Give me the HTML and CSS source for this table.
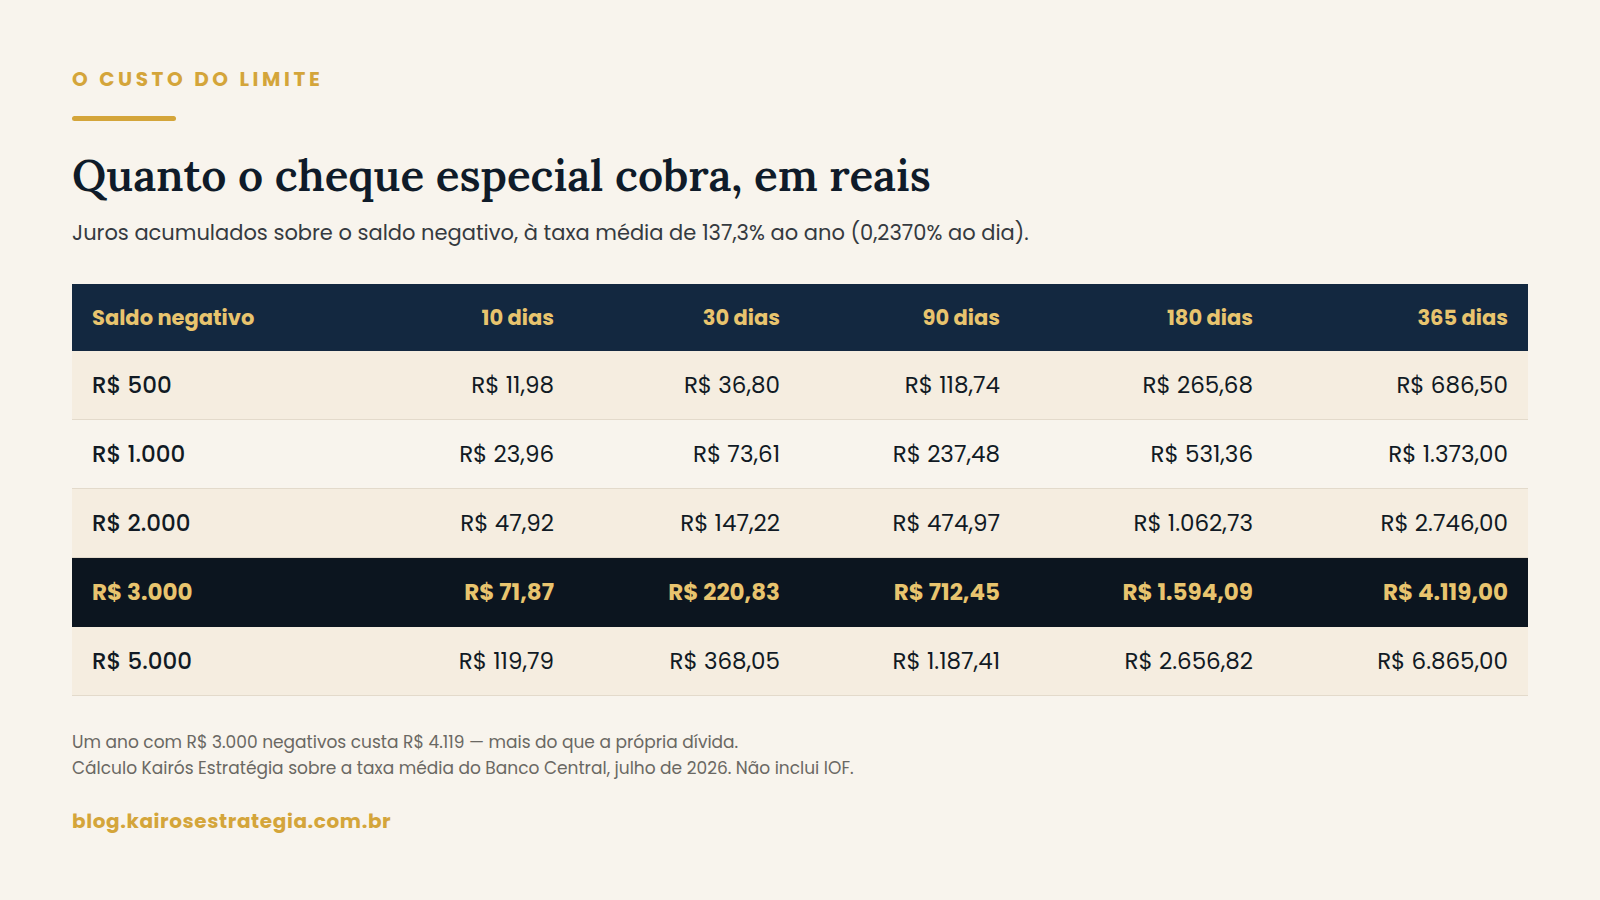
FILE: index.html
```html
<!DOCTYPE html>
<html lang="pt-BR">
<head>
<meta charset="utf-8">
<title>O custo do limite</title>
<link rel="stylesheet" href="styles.css">
</head>
<body>
<main class="page">
  <p class="eyebrow">O CUSTO DO LIMITE</p>
  <div class="rule"></div>
  <h1 class="title">Quanto o cheque especial cobra, em reais</h1>
  <p class="subtitle">Juros acumulados sobre o saldo negativo, à taxa média de 137,3% ao ano (0,2370% ao dia).</p>

  <table class="costs">
    <colgroup>
      <col class="c1"><col class="c2"><col class="c3"><col class="c4"><col class="c5"><col class="c6">
    </colgroup>
    <thead>
      <tr>
        <th class="left">Saldo negativo</th>
        <th>10 dias</th>
        <th>30 dias</th>
        <th>90 dias</th>
        <th>180 dias</th>
        <th>365 dias</th>
      </tr>
    </thead>
    <tbody>
      <tr class="alt">
        <td class="left">R$ 500</td><td>R$ 11,98</td><td>R$ 36,80</td><td>R$ 118,74</td><td>R$ 265,68</td><td>R$ 686,50</td>
      </tr>
      <tr>
        <td class="left">R$ 1.000</td><td>R$ 23,96</td><td>R$ 73,61</td><td>R$ 237,48</td><td>R$ 531,36</td><td>R$ 1.373,00</td>
      </tr>
      <tr class="alt">
        <td class="left">R$ 2.000</td><td>R$ 47,92</td><td>R$ 147,22</td><td>R$ 474,97</td><td>R$ 1.062,73</td><td>R$ 2.746,00</td>
      </tr>
      <tr class="hl">
        <td class="left">R$ 3.000</td><td>R$ 71,87</td><td>R$ 220,83</td><td>R$ 712,45</td><td>R$ 1.594,09</td><td>R$ 4.119,00</td>
      </tr>
      <tr class="alt">
        <td class="left">R$ 5.000</td><td>R$ 119,79</td><td>R$ 368,05</td><td>R$ 1.187,41</td><td>R$ 2.656,82</td><td>R$ 6.865,00</td>
      </tr>
    </tbody>
  </table>

  <div class="notes">
    <p>Um ano com R$ 3.000 negativos custa R$ 4.119 — mais do que a própria dívida.</p>
    <p>Cálculo Kairós Estratégia sobre a taxa média do Banco Central, julho de 2026. Não inclui IOF.</p>
  </div>

  <p class="site">blog.kairosestrategia.com.br</p>
</main>
</body>
</html>
```
FILE: styles.css
```css
* { box-sizing: border-box; }

html, body {
  margin: 0;
  padding: 0;
  background: #f8f4ed;
}

body {
  font-family: "Poppins", "Inter", "Noto Sans", sans-serif;
  color: #111a24;
  width: 1600px;
  height: 900px;
  overflow: hidden;
}

.page {
  padding: 69px 72px 0 72px;
  display: flex;
  flex-direction: column;
  align-items: flex-start;
}

.eyebrow {
  margin: 0;
  font-size: 20px;
  line-height: 20px;
  font-weight: 700;
  letter-spacing: 3.6px;
  color: #d4a53a;
}

.rule {
  margin-top: 27px;
  width: 104px;
  height: 5px;
  border-radius: 3px;
  background: #d4a53a;
}

.title {
  margin: 28px 0 0 0;
  font-family: "Lora", "DejaVu Serif", serif;
  font-weight: 600;
  font-size: 44px;
  line-height: 53px;
  color: #0f1b29;
}

.subtitle {
  margin: 15px 0 0 0;
  font-size: 21px;
  line-height: 31px;
  font-weight: 400;
  color: #353a40;
}

.costs {
  margin-top: 36px;
  width: 1456px;
  border-collapse: collapse;
  table-layout: fixed;
}

.c1 { width: 260px; }
.c2 { width: 242px; }
.c3 { width: 226px; }
.c4 { width: 220px; }
.c5 { width: 253px; }
.c6 { width: 255px; }

.costs th {
  background: #132840;
  color: #e8c46e;
  font-size: 21px;
  font-weight: 700;
  line-height: 27px;
  padding: 20px 20px;
  text-align: right;
  white-space: nowrap;
}

.costs td {
  font-size: 23px;
  line-height: 28px;
  font-weight: 400;
  padding: 20px 20px;
  text-align: right;
  white-space: nowrap;
  color: #111a24;
  border-bottom: 1px solid #e3dacb;
}

.costs .left { text-align: left; }

.costs td.left { font-weight: 500; }

.costs tr.alt td { background: #f5ede0; }

.costs tr.hl td {
  background: #0c151f;
  color: #e8c46e;
  font-weight: 700;
  border-bottom-color: #0c151f;
}

.notes {
  margin-top: 34px;
}

.notes p {
  margin: 0;
  font-size: 17px;
  line-height: 25.5px;
  color: #6a6863;
}

.site {
  margin: 25px 0 0 0;
  font-size: 20px;
  line-height: 30px;
  font-weight: 700;
  letter-spacing: 0.6px;
  color: #d4a53a;
}
```
